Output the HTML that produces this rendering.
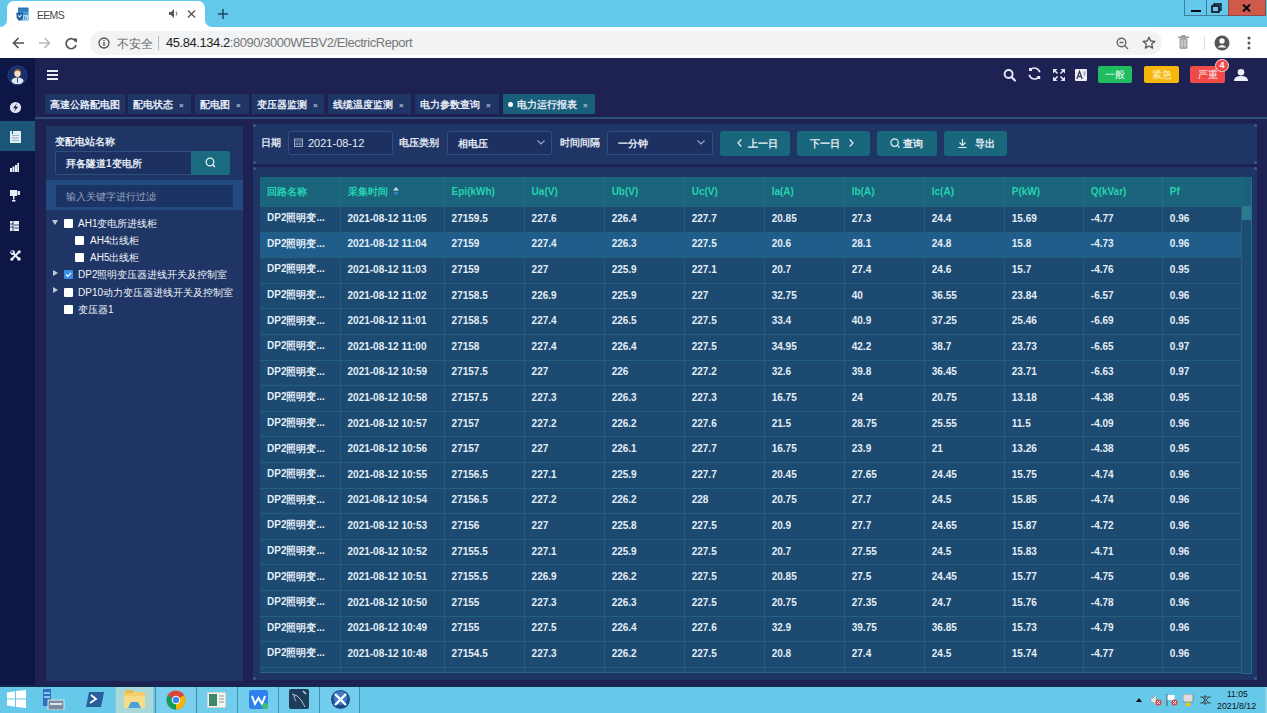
<!DOCTYPE html>
<html><head><meta charset="utf-8"><title>EEMS</title>
<style>
*{box-sizing:border-box;margin:0;padding:0}
html,body{width:1267px;height:713px;overflow:hidden;background:#1d2252;font-family:"Liberation Sans",sans-serif;position:relative}
.abs{position:absolute}
/* chrome */
#tabstrip{left:0;top:0;width:1267px;height:27px;background:#63c8ea}
#ctab{left:7px;top:1px;width:198px;height:27px;background:#fff;border-radius:7px 7px 0 0}
#toolbar{left:0;top:27px;width:1267px;height:31px;background:#fff}
#addr{left:90px;top:31px;width:1072px;height:24px;background:#f1f3f4;border-radius:12px}
.ctext{font-size:12px;color:#333;white-space:nowrap}
/* app */
#side{left:0;top:58px;width:35px;height:628px;background:#0e1645}
#sideact{left:0;top:121px;width:35px;height:30px;background:#1b5578}
#head{left:35px;top:58px;width:1232px;height:34px;background:#1d2252}
.tab{position:absolute;top:94px;height:19.5px;background:#1f3566;color:#e6ecf6;font-size:10px;font-weight:700;line-height:21px;padding-left:5px;white-space:nowrap;overflow:hidden}
.tab .x{font-size:8px;color:#b8c0d0;margin-left:6px}
#tabline{left:35px;top:117px;width:1232px;height:1.5px;background:#2b5078}
#lp{left:46px;top:126px;width:197px;height:555px;background:#1f3566}
#rp1{left:253px;top:124px;width:1004px;height:40px;background:#1f3566}
#rp2{left:253px;top:167px;width:1004px;height:513px;background:#1f3566}
.lbl{position:absolute;font-size:10px;color:#e3e9f3;white-space:nowrap;font-weight:700}
.inp{position:absolute;border:1px solid #2e4f80;background:#1c3162;border-radius:2px}
.btn{position:absolute;top:131px;height:25px;background:#19677d;border-radius:3px;color:#e6eef5;font-size:10px;font-weight:700;line-height:26px;white-space:nowrap;overflow:hidden}
/* table */
#tbl{left:260px;top:176px;width:982px;border-collapse:collapse;table-layout:fixed}
#tbl th{height:29.5px;background:#1a647c;color:#25d3ae;font-size:10px;font-weight:700;text-align:left;padding-left:7px;border-right:1px solid #1e7086;white-space:nowrap}
#tbl td{height:25.6px;background:#1c4a70;color:#e4eef8;font-size:10px;font-weight:700;padding-left:7px;padding-bottom:2px;border-right:1px solid #235d7e;border-top:1px solid #235f7e;white-space:nowrap;overflow:hidden}
#tbl tr.hl td{background:#215d8b}
#tblwrap{left:260px;top:177px;width:991px;height:496px;overflow:hidden;border:1px solid #2a6789;border-top:none;border-left:none}
#sb{left:1241px;top:177px;width:11px;height:497px;background:#1c4c70;border-left:1px solid #24607f;border-right:1px solid #2a6a8a;border-bottom:1px solid #2a6a8a}
#sbh{left:1242px;top:177px;width:9px;height:29.5px;background:#1a627a}
#sbth{left:1242px;top:206px;width:9px;height:14px;background:#2a7b90}
/* taskbar */
#task{left:0;top:685px;width:1267px;height:28px;background:#66c9ea;border-top:2px solid #13284f}
.dot{position:absolute;width:3px;height:3px;border-radius:1.5px;background:#3d5a92}
.tile{position:absolute;top:687px;height:26px;width:41px;border-left:1px solid #3f90b0;background:#72ccec}
</style></head><body>
<!-- Chrome tab strip -->
<div id="tabstrip" class="abs"></div>
<div class="abs" style="left:0;top:19px;width:220px;height:8px;background:#fff"></div>
<div class="abs" style="left:0;top:0;width:7px;height:27px;background:#63c8ea;border-radius:0 0 7px 0"></div>
<div class="abs" style="left:205px;top:0;width:1062px;height:27px;background:#63c8ea;border-radius:0 0 0 7px"></div>
<div id="ctab" class="abs"></div>
<svg class="abs" style="left:16px;top:7px" width="14" height="14" viewBox="0 0 14 14"><rect x="2" y="0.5" width="10.5" height="13" fill="#3c95d8"/><path d="M2 1.5h10.5M2 3.5h10.5M4 0.5v4M7 0.5v4M10 0.5v4" stroke="#2a6ea8" stroke-width="0.9"/><path d="M0.5 5.5h6.5v3.5q0 3.5-3.25 4.5Q0.5 12.5 0.5 9z" fill="#1d5e98"/><path d="M2.2 8.3l1.5 1.8 1.8-2.6" stroke="#cfe8ff" stroke-width="1.1" fill="none"/><rect x="7" y="8" width="5.5" height="5.5" fill="#a6d8f6"/><path d="M8.5 12.5v-3M10.5 12.5v-2" stroke="#3c7fb8" stroke-width="0.9"/></svg>
<div class="abs ctext" style="left:37px;top:9px;font-size:10.5px;letter-spacing:-0.7px;color:#4a4a4a">EEMS</div>
<svg class="abs" style="left:169px;top:9px" width="10" height="9" viewBox="0 0 10 9"><path d="M0 3h2l3-3v9l-3-3H0z" fill="#555"/><path d="M7 2.5q1.5 2 0 4" stroke="#888" fill="none" stroke-width="1.2"/></svg>
<svg class="abs" style="left:187px;top:10px" width="9" height="8" viewBox="0 0 9 8"><path d="M1 0.5L8 7.5M8 0.5L1 7.5" stroke="#555" stroke-width="1.4"/></svg>
<svg class="abs" style="left:218px;top:9px" width="10" height="10" viewBox="0 0 10 10"><path d="M5 0v10M0 5h10" stroke="#1f4a5e" stroke-width="1.5"/></svg>
<!-- window controls -->
<div class="abs" style="left:1184px;top:0;width:23px;height:16px;border:1px solid #3f7f9c;border-top:none;border-right:none"></div>
<div class="abs" style="left:1191px;top:10px;width:10px;height:2px;background:#0a0a14"></div>
<div class="abs" style="left:1206px;top:0;width:22px;height:16px;border:1px solid #3f7f9c;border-top:none;border-right:none"></div>
<svg class="abs" style="left:1211px;top:3px" width="11" height="10" viewBox="0 0 11 10"><path d="M3 2.5V1h7v6H8.5" fill="none" stroke="#0a0a14" stroke-width="1.3"/><rect x="1" y="3" width="7" height="6" fill="none" stroke="#0a0a14" stroke-width="1.6"/></svg>
<div class="abs" style="left:1228px;top:0;width:38px;height:16px;background:#cf5a4c;border:1px solid #8b4a46;border-top:none"></div>
<svg class="abs" style="left:1242px;top:4px" width="9" height="8" viewBox="0 0 9 8"><path d="M1 0.5L8 7.5M8 0.5L1 7.5" stroke="#0a0a14" stroke-width="2.1"/></svg>
<!-- toolbar -->
<div id="toolbar" class="abs"></div>
<svg class="abs" style="left:12px;top:37px" width="13" height="12" viewBox="0 0 13 12"><path d="M12 6H1.5M6.5 1L1.5 6l5 5" stroke="#555" stroke-width="1.7" fill="none"/></svg>
<svg class="abs" style="left:38px;top:37px" width="13" height="12" viewBox="0 0 13 12"><path d="M1 6h10.5M6.5 1l5 5-5 5" stroke="#bbb" stroke-width="1.7" fill="none"/></svg>
<svg class="abs" style="left:65px;top:37px" width="13" height="13" viewBox="0 0 13 13"><path d="M10.5 4.2A5 5 0 1 0 11 8" stroke="#555" stroke-width="1.7" fill="none"/><path d="M7.5 1.5h4.5v4.5z" fill="#555"/></svg>
<div id="addr" class="abs"></div>
<svg class="abs" style="left:98px;top:37px" width="12" height="12" viewBox="0 0 12 12"><circle cx="6" cy="6" r="5" stroke="#555" stroke-width="1.3" fill="none"/><rect x="5.3" y="5" width="1.4" height="4" fill="#555"/><rect x="5.3" y="2.8" width="1.4" height="1.4" fill="#555"/></svg>
<div class="abs ctext" style="left:117px;top:36px;color:#666;font-size:12px">不安全</div>
<div class="abs" style="left:158px;top:36px;width:1px;height:14px;background:#bbb"></div>
<div class="abs ctext" style="left:166px;top:35px;font-size:13px;letter-spacing:-0.45px"><span style="color:#222">45.84.134.2</span><span style="color:#777">:8090/3000WEBV2/ElectricReport</span></div>
<svg class="abs" style="left:1116px;top:37px" width="13" height="13" viewBox="0 0 13 13"><circle cx="5.5" cy="5.5" r="4.3" stroke="#666" stroke-width="1.4" fill="none"/><path d="M8.5 8.5l3.5 3.5M3.5 5.5h4" stroke="#666" stroke-width="1.4"/></svg>
<svg class="abs" style="left:1142px;top:36px" width="14" height="14" viewBox="0 0 14 14"><path d="M7 1.2l1.7 3.8 4.1.4-3.1 2.7.9 4L7 10 3.4 12.1l.9-4L1.2 5.4l4.1-.4z" stroke="#555" stroke-width="1.3" fill="none" stroke-linejoin="round"/></svg>
<svg class="abs" style="left:1178px;top:35px" width="11" height="15" viewBox="0 0 11 15"><rect x="1.5" y="3" width="8" height="11" rx="1" fill="#aaa"/><rect x="0" y="1.5" width="11" height="1.5" fill="#999"/><rect x="3.5" y="0" width="4" height="2" fill="#999"/><path d="M4 5v7M7 5v7" stroke="#ddd" stroke-width="1"/></svg>
<div class="abs" style="left:1204px;top:36px;width:1px;height:14px;background:#ddd"></div>
<svg class="abs" style="left:1214px;top:35px" width="16" height="16" viewBox="0 0 16 16"><circle cx="8" cy="8" r="7.5" fill="#555"/><circle cx="8" cy="6" r="2.7" fill="#fff"/><path d="M3.5 12.5q4.5-5 9 0" fill="#fff"/></svg>
<svg class="abs" style="left:1247px;top:36px" width="4" height="14" viewBox="0 0 4 14"><circle cx="2" cy="2" r="1.5" fill="#555"/><circle cx="2" cy="7" r="1.5" fill="#555"/><circle cx="2" cy="12" r="1.5" fill="#555"/></svg>
<!-- app -->
<div id="side" class="abs"></div>
<div id="sideact" class="abs"></div>
<!-- avatar -->
<svg class="abs" style="left:7px;top:65px" width="21" height="21" viewBox="0 0 21 21"><circle cx="10.5" cy="10.5" r="10" fill="#182f6c"/><circle cx="10.5" cy="10.5" r="9.6" fill="none" stroke="#22407e" stroke-width="0.8"/><ellipse cx="10.5" cy="15.8" rx="6" ry="3.3" fill="#dde9f4"/><rect x="10" y="13" width="1" height="4.5" fill="#3a4a5a"/><ellipse cx="10.5" cy="8.3" rx="3.2" ry="3.6" fill="#fbdcbc"/><path d="M7.3 7.6q0-3.6 3.2-3.6t3.2 3.6q-.6-1.8-3.2-1.8t-3.2 1.8z" fill="#a8652e"/></svg>
<!-- side icons -->
<svg class="abs" style="left:9px;top:101px" width="13" height="13" viewBox="0 0 13 13"><circle cx="6.5" cy="6.5" r="5.6" fill="#dfe4f0"/><path d="M8 2.2L4 7.2h2.6L5 10.8 9.2 5.8H6.6z" fill="#10174a"/></svg>
<svg class="abs" style="left:10px;top:131px" width="11" height="12" viewBox="0 0 11 12"><rect x="0" y="0" width="11" height="12" fill="#e4ecf6"/><rect x="2" y="0" width="1" height="3" fill="#1b5578"/><path d="M2 4.5h7M2 7h7M2 9.5h7" stroke="#8fb0c8" stroke-width="0.9"/></svg>
<svg class="abs" style="left:10px;top:163px" width="9" height="9" viewBox="0 0 9 9"><rect x="0" y="5" width="2" height="4" fill="#e8eef8"/><rect x="2.5" y="3.5" width="2" height="5.5" fill="#e8eef8"/><rect x="5" y="2" width="2" height="7" fill="#e8eef8"/><rect x="7.3" y="0" width="1.7" height="9" fill="#e8eef8"/></svg>
<svg class="abs" style="left:10px;top:190px" width="10" height="12" viewBox="0 0 10 12"><rect x="0" y="0" width="7" height="6" fill="#e8eef8"/><rect x="7.5" y="1" width="2.5" height="4" fill="#e8eef8"/><rect x="3" y="6" width="1.5" height="3.5" fill="#e8eef8"/><rect x="2" y="10" width="3.5" height="1.5" fill="#e8eef8"/></svg>
<svg class="abs" style="left:10px;top:221px" width="9" height="10" viewBox="0 0 9 10"><rect x="0" y="0" width="9" height="10" fill="#e8eef8"/><path d="M3 0v10M0 3h3M0 6h3M4 4h5M4 7h5" stroke="#10174a" stroke-width="0.8"/></svg>
<svg class="abs" style="left:10px;top:250px" width="11" height="11" viewBox="0 0 11 11"><path d="M2 9L9 2M3 3l6 6" stroke="#e8eef8" stroke-width="2"/><circle cx="2.6" cy="2.6" r="2.4" fill="#e8eef8"/><circle cx="2" cy="2" r="0.9" fill="#0e1645"/><circle cx="9" cy="9" r="1.8" fill="#e8eef8"/><circle cx="9.2" cy="1.8" r="1.6" fill="#e8eef8"/><circle cx="1.8" cy="9.2" r="1.5" fill="#e8eef8"/></svg>
<!-- header -->
<div id="head" class="abs"></div>
<svg class="abs" style="left:47px;top:70px" width="11" height="10" viewBox="0 0 11 10"><path d="M0 1h11M0 5h11M0 9h11" stroke="#e8eef8" stroke-width="1.8"/></svg>
<svg class="abs" style="left:1002px;top:68px" width="15" height="15" viewBox="0 0 15 15"><circle cx="6.6" cy="6" r="4" stroke="#e6e8f6" stroke-width="1.9" fill="none"/><path d="M9.5 9L13 12.5" stroke="#e6e8f6" stroke-width="2.2" stroke-linecap="round"/></svg>
<svg class="abs" style="left:1027px;top:66px" width="15" height="15" viewBox="0 0 15 15"><path d="M3.5 3.6A5.6 5.6 0 0 1 12.8 6.2M11.5 11.4A5.6 5.6 0 0 1 2.2 8.8" stroke="#e6e8f6" stroke-width="1.7" fill="none"/><rect x="2" y="2" width="3" height="3" fill="#e6e8f6"/><rect x="10.2" y="10" width="3" height="3" fill="#e6e8f6"/></svg>
<svg class="abs" style="left:1053px;top:69px" width="12" height="12" viewBox="0 0 12 12"><path d="M0 0h4.5L0 4.5zM12 0v4.5L7.5 0zM0 12V7.5L4.5 12zM12 12H7.5L12 7.5z" fill="#e6e8f6"/><path d="M1.5 1.5l3 3M10.5 1.5l-3 3M1.5 10.5l3-3M10.5 10.5l-3-3" stroke="#e6e8f6" stroke-width="1.6"/></svg>
<svg class="abs" style="left:1075px;top:69px" width="12" height="12" viewBox="0 0 12 12"><rect width="12" height="12" rx="1" fill="#ecedf7"/><path d="M1.8 10L4.5 2.5 7.2 10M2.8 7.5h3.4" stroke="#3a3d55" stroke-width="1.3" fill="none"/><path d="M8.3 3h2.5M8.3 5h2.5M9.5 3v4" stroke="#9a9cb0" stroke-width="0.8"/></svg>
<div class="abs" style="left:1098px;top:66px;width:34px;height:17px;background:#1fbd60;border-radius:2px;color:#e8fff0;font-size:10px;line-height:17px;text-align:center">一般</div>
<div class="abs" style="left:1144px;top:66px;width:35px;height:17px;background:#f4b70a;border-radius:2px;color:#fff5dd;font-size:10px;line-height:17px;text-align:center">紧急</div>
<div class="abs" style="left:1190px;top:66px;width:35px;height:17px;background:#f04a48;border-radius:2px;color:#ffecec;font-size:10px;line-height:17px;text-align:center">严重</div>
<div class="abs" style="left:1215px;top:59px;width:14px;height:13px;background:#f04a48;border:1.5px solid #f6d6d6;border-radius:7px;color:#fff;font-size:9px;line-height:10px;text-align:center;font-weight:700">4</div>
<svg class="abs" style="left:1234px;top:69px" width="14" height="12" viewBox="0 0 14 12"><circle cx="7" cy="3.3" r="3.3" fill="#eef"/><path d="M0 12q0-5 7-5t7 5z" fill="#eef"/></svg>
<!-- tabs -->
<div class="tab" style="left:45px;width:80px">高速公路配电图</div>
<div class="tab" style="left:128px;width:63px">配电状态<span class="x">×</span></div>
<div class="tab" style="left:195px;width:54px">配电图<span class="x">×</span></div>
<div class="tab" style="left:252px;width:72px">变压器监测<span class="x">×</span></div>
<div class="tab" style="left:328px;width:83px">线缆温度监测<span class="x">×</span></div>
<div class="tab" style="left:415px;width:84px">电力参数查询<span class="x">×</span></div>
<div class="tab" style="left:503px;width:92px;background:#175f7a"><span style="display:inline-block;width:5px;height:5px;border-radius:3px;background:#fff;margin-right:4px;vertical-align:1px"></span>电力运行报表<span class="x">×</span></div>
<div id="tabline" class="abs"></div>
<!-- left panel -->
<div id="lp" class="abs"></div>
<div class="lbl" style="left:55px;top:135px">变配电站名称</div>
<div class="inp" style="left:55px;top:151px;width:137px;height:24px;border-right:none"></div>
<div class="lbl" style="left:66px;top:157px">拜各隧道1变电所</div>
<div class="abs" style="left:191px;top:151px;width:39px;height:24px;background:#1a6a80;border-radius:0 2px 2px 0"></div>
<svg class="abs" style="left:205px;top:157px" width="11" height="11" viewBox="0 0 11 11"><circle cx="5" cy="5" r="3.8" stroke="#e6eef5" stroke-width="1.3" fill="none"/><path d="M7.8 7.8L10 10" stroke="#e6eef5" stroke-width="1.3"/></svg>
<div class="abs" style="left:46px;top:180px;width:197px;height:30px;background:#244a82"></div>
<div class="abs" style="left:56px;top:185px;width:177px;height:22px;background:#1c3465"></div>
<div class="lbl" style="left:66px;top:190px;color:#95a3bf;font-weight:400">输入关键字进行过滤</div>
<!-- tree -->
<svg class="abs" style="left:52px;top:220px" width="6" height="5" viewBox="0 0 6 5"><path d="M0 0h6L3 5z" fill="#c0c8d8"/></svg>
<div class="abs" style="left:64px;top:219px;width:9px;height:9px;background:#fff;border-radius:1px"></div>
<div class="lbl" style="left:78px;top:217px;font-weight:400;color:#f2f5fa">AH1变电所进线柜</div>
<div class="abs" style="left:75px;top:236px;width:9px;height:9px;background:#fff;border-radius:1px"></div>
<div class="lbl" style="left:90px;top:234px;font-weight:400;color:#f2f5fa">AH4出线柜</div>
<div class="abs" style="left:75px;top:253px;width:9px;height:9px;background:#fff;border-radius:1px"></div>
<div class="lbl" style="left:90px;top:251px;font-weight:400;color:#f2f5fa">AH5出线柜</div>
<svg class="abs" style="left:53px;top:270px" width="5" height="6" viewBox="0 0 5 6"><path d="M0 0v6l5-3z" fill="#c0c8d8"/></svg>
<div class="abs" style="left:64px;top:270px;width:9px;height:9px;background:#3a8ee6;border-radius:1px"></div>
<svg class="abs" style="left:65px;top:271px" width="7" height="7" viewBox="0 0 7 7"><path d="M1 3.5l1.8 1.8L6 1.8" stroke="#fff" stroke-width="1.2" fill="none"/></svg>
<div class="lbl" style="left:78px;top:268px;font-weight:400;color:#f2f5fa">DP2照明变压器进线开关及控制室</div>
<svg class="abs" style="left:53px;top:287px" width="5" height="6" viewBox="0 0 5 6"><path d="M0 0v6l5-3z" fill="#c0c8d8"/></svg>
<div class="abs" style="left:64px;top:288px;width:9px;height:9px;background:#fff;border-radius:1px"></div>
<div class="lbl" style="left:78px;top:286px;font-weight:400;color:#f2f5fa">DP10动力变压器进线开关及控制室</div>
<div class="abs" style="left:64px;top:305px;width:9px;height:9px;background:#fff;border-radius:1px"></div>
<div class="lbl" style="left:78px;top:303px;font-weight:400;color:#f2f5fa">变压器1</div>
<!-- right toolbar -->
<div id="rp1" class="abs"></div>
<div class="lbl" style="left:261px;top:136px">日期</div>
<div class="inp" style="left:288px;top:131px;width:105px;height:24px"></div>
<svg class="abs" style="left:294px;top:138px" width="9" height="9" viewBox="0 0 9 9"><rect x="0.5" y="1" width="8" height="7.5" stroke="#9aa8c0" fill="none"/><path d="M0.5 3h8M3 4.5v3M6 4.5v3M0.5 6h8" stroke="#9aa8c0" stroke-width="0.8"/></svg>
<div class="lbl" style="left:308px;top:137px;font-size:11px;font-weight:400;color:#e8eef6">2021-08-12</div>
<div class="lbl" style="left:399px;top:136px">电压类别</div>
<div class="inp" style="left:447px;top:131px;width:105px;height:24px"></div>
<div class="lbl" style="left:458px;top:137px">相电压</div>
<svg class="abs" style="left:537px;top:140px" width="8" height="5" viewBox="0 0 8 5"><path d="M0.5 0.5L4 4l3.5-3.5" stroke="#9aa8c0" stroke-width="1.1" fill="none"/></svg>
<div class="lbl" style="left:560px;top:136px">时间间隔</div>
<div class="inp" style="left:607px;top:131px;width:106px;height:24px"></div>
<div class="lbl" style="left:618px;top:137px">一分钟</div>
<svg class="abs" style="left:697px;top:140px" width="8" height="5" viewBox="0 0 8 5"><path d="M0.5 0.5L4 4l3.5-3.5" stroke="#9aa8c0" stroke-width="1.1" fill="none"/></svg>
<div class="btn" style="left:720px;width:70px;padding-left:17px"><svg width="5" height="8" viewBox="0 0 5 8" style="vertical-align:-0px;margin-right:6px"><path d="M4.3 0.5L1 4l3.3 3.5" stroke="#e6eef5" stroke-width="1.2" fill="none"/></svg>上一日</div>
<div class="btn" style="left:797px;width:73px;padding-left:13px">下一日<svg width="5" height="8" viewBox="0 0 5 8" style="vertical-align:0px;margin-left:9px"><path d="M0.7 0.5L4 4 0.7 7.5" stroke="#e6eef5" stroke-width="1.2" fill="none"/></svg></div>
<div class="btn" style="left:877px;width:60px;padding-left:13px"><svg width="10" height="10" viewBox="0 0 10 10" style="vertical-align:-1px;margin-right:3px"><circle cx="4.6" cy="4.6" r="3.7" stroke="#e6eef5" stroke-width="1.2" fill="none"/><path d="M7.2 7.2L9.5 9.5" stroke="#e6eef5" stroke-width="1.2"/></svg>查询</div>
<div class="btn" style="left:944px;width:63px;padding-left:14px"><svg width="9" height="9" viewBox="0 0 9 9" style="vertical-align:-1px;margin-right:8px"><path d="M4.5 0v6M1.5 3.5l3 3 3-3M0.5 8.5h8" stroke="#e6eef5" stroke-width="1.1" fill="none"/></svg>导出</div>
<!-- table panel -->
<div id="rp2" class="abs"></div>
<div id="tblwrap" class="abs">
<table id="tbl" style="position:absolute;left:0;top:0">
<colgroup><col style="width:80px"><col style="width:104px"><col style="width:80px"><col style="width:80px"><col style="width:80px"><col style="width:80px"><col style="width:80px"><col style="width:80px"><col style="width:80px"><col style="width:79px"><col style="width:79px"><col style="width:79px"></colgroup>
<thead><tr><th>回路名称</th><th>采集时间 <svg width="6" height="9" viewBox="0 0 6 9" style="vertical-align:-1px;margin-left:3px"><path d="M0 3.5L3 0l3 3.5z" fill="#bfe0f5"/><path d="M0 5L3 9l3-4z" fill="#2d7fc0"/></svg></th><th>Epi(kWh)</th><th>Ua(V)</th><th>Ub(V)</th><th>Uc(V)</th><th>Ia(A)</th><th>Ib(A)</th><th>Ic(A)</th><th>P(kW)</th><th>Q(kVar)</th><th>Pf</th></tr></thead>
<tbody>
<tr><td>DP2照明变...</td><td>2021-08-12 11:05</td><td>27159.5</td><td>227.6</td><td>226.4</td><td>227.7</td><td>20.85</td><td>27.3</td><td>24.4</td><td>15.69</td><td>-4.77</td><td>0.96</td></tr>
<tr class="hl"><td>DP2照明变...</td><td>2021-08-12 11:04</td><td>27159</td><td>227.4</td><td>226.3</td><td>227.5</td><td>20.6</td><td>28.1</td><td>24.8</td><td>15.8</td><td>-4.73</td><td>0.96</td></tr>
<tr><td>DP2照明变...</td><td>2021-08-12 11:03</td><td>27159</td><td>227</td><td>225.9</td><td>227.1</td><td>20.7</td><td>27.4</td><td>24.6</td><td>15.7</td><td>-4.76</td><td>0.95</td></tr>
<tr><td>DP2照明变...</td><td>2021-08-12 11:02</td><td>27158.5</td><td>226.9</td><td>225.9</td><td>227</td><td>32.75</td><td>40</td><td>36.55</td><td>23.84</td><td>-6.57</td><td>0.96</td></tr>
<tr><td>DP2照明变...</td><td>2021-08-12 11:01</td><td>27158.5</td><td>227.4</td><td>226.5</td><td>227.5</td><td>33.4</td><td>40.9</td><td>37.25</td><td>25.46</td><td>-6.69</td><td>0.95</td></tr>
<tr><td>DP2照明变...</td><td>2021-08-12 11:00</td><td>27158</td><td>227.4</td><td>226.4</td><td>227.5</td><td>34.95</td><td>42.2</td><td>38.7</td><td>23.73</td><td>-6.65</td><td>0.97</td></tr>
<tr><td>DP2照明变...</td><td>2021-08-12 10:59</td><td>27157.5</td><td>227</td><td>226</td><td>227.2</td><td>32.6</td><td>39.8</td><td>36.45</td><td>23.71</td><td>-6.63</td><td>0.97</td></tr>
<tr><td>DP2照明变...</td><td>2021-08-12 10:58</td><td>27157.5</td><td>227.3</td><td>226.3</td><td>227.3</td><td>16.75</td><td>24</td><td>20.75</td><td>13.18</td><td>-4.38</td><td>0.95</td></tr>
<tr><td>DP2照明变...</td><td>2021-08-12 10:57</td><td>27157</td><td>227.2</td><td>226.2</td><td>227.6</td><td>21.5</td><td>28.75</td><td>25.55</td><td>11.5</td><td>-4.09</td><td>0.96</td></tr>
<tr><td>DP2照明变...</td><td>2021-08-12 10:56</td><td>27157</td><td>227</td><td>226.1</td><td>227.7</td><td>16.75</td><td>23.9</td><td>21</td><td>13.26</td><td>-4.38</td><td>0.95</td></tr>
<tr><td>DP2照明变...</td><td>2021-08-12 10:55</td><td>27156.5</td><td>227.1</td><td>225.9</td><td>227.7</td><td>20.45</td><td>27.65</td><td>24.45</td><td>15.75</td><td>-4.74</td><td>0.96</td></tr>
<tr><td>DP2照明变...</td><td>2021-08-12 10:54</td><td>27156.5</td><td>227.2</td><td>226.2</td><td>228</td><td>20.75</td><td>27.7</td><td>24.5</td><td>15.85</td><td>-4.74</td><td>0.96</td></tr>
<tr><td>DP2照明变...</td><td>2021-08-12 10:53</td><td>27156</td><td>227</td><td>225.8</td><td>227.5</td><td>20.9</td><td>27.7</td><td>24.65</td><td>15.87</td><td>-4.72</td><td>0.96</td></tr>
<tr><td>DP2照明变...</td><td>2021-08-12 10:52</td><td>27155.5</td><td>227.1</td><td>225.9</td><td>227.5</td><td>20.7</td><td>27.55</td><td>24.5</td><td>15.83</td><td>-4.71</td><td>0.96</td></tr>
<tr><td>DP2照明变...</td><td>2021-08-12 10:51</td><td>27155.5</td><td>226.9</td><td>226.2</td><td>227.5</td><td>20.85</td><td>27.5</td><td>24.45</td><td>15.77</td><td>-4.75</td><td>0.96</td></tr>
<tr><td>DP2照明变...</td><td>2021-08-12 10:50</td><td>27155</td><td>227.3</td><td>226.3</td><td>227.5</td><td>20.75</td><td>27.35</td><td>24.7</td><td>15.76</td><td>-4.78</td><td>0.96</td></tr>
<tr><td>DP2照明变...</td><td>2021-08-12 10:49</td><td>27155</td><td>227.5</td><td>226.4</td><td>227.6</td><td>32.9</td><td>39.75</td><td>36.85</td><td>15.73</td><td>-4.79</td><td>0.96</td></tr>
<tr><td>DP2照明变...</td><td>2021-08-12 10:48</td><td>27154.5</td><td>227.3</td><td>226.2</td><td>227.5</td><td>20.8</td><td>27.4</td><td>24.5</td><td>15.74</td><td>-4.77</td><td>0.96</td></tr>
<tr><td>DP2照明变...</td><td>2021-08-12 10:47</td><td>27154.5</td><td>227.3</td><td>226.2</td><td>227.5</td><td>20.8</td><td>27.4</td><td>24.5</td><td>15.74</td><td>-4.77</td><td>0.96</td></tr></tbody></table>
</div>
<div id="sb" class="abs"></div>
<div id="sbh" class="abs"></div>
<div id="sbth" class="abs"></div>
<div class="dot" style="left:253px;top:124px"></div><div class="dot" style="left:1254px;top:124px"></div><div class="dot" style="left:253px;top:161px"></div><div class="dot" style="left:1254px;top:161px"></div><div class="dot" style="left:253px;top:167px"></div><div class="dot" style="left:1254px;top:167px"></div><div class="dot" style="left:253px;top:677px"></div><div class="dot" style="left:1254px;top:677px"></div>
<!-- taskbar -->
<div id="task" class="abs"></div>
<svg class="abs" style="left:7px;top:690px" width="19" height="18" viewBox="0 0 19 18"><path d="M0 2.5L8 1.3V8.5H0zM9 1.1L19 0V8.5H9zM0 9.5h8v7.2L0 15.5zM9 9.5h10V18L9 16.9z" fill="#fff"/></svg>
<svg class="abs" style="left:43px;top:689px" width="22" height="21" viewBox="0 0 22 21"><rect x="0" y="0" width="8" height="17" fill="#2e6fc0"/><rect x="1" y="3" width="6" height="2" fill="#8fc4f0"/><rect x="1" y="7" width="6" height="2" fill="#8fc4f0"/><rect x="5" y="11" width="16" height="10" fill="#7a8ca0" stroke="#dfe8ef" stroke-width="1"/><rect x="7" y="14" width="12" height="2" fill="#e0e8ef"/></svg>
<svg class="abs" style="left:86px;top:692px" width="18" height="15" viewBox="0 0 18 15"><path d="M3 0h15l-3 15H0z" fill="#2a5d9c"/><path d="M5 3l5 4-6 4" stroke="#fff" stroke-width="1.8" fill="none"/></svg>
<div class="abs" style="left:115px;top:687px;width:39px;height:26px;background:#a9d8d8;border-left:1px solid #86c8dc;border-right:1px solid #86c8dc"></div>
<svg class="abs" style="left:124px;top:690px" width="21" height="19" viewBox="0 0 21 19"><rect x="0" y="2" width="21" height="16" fill="#f2cd6a"/><rect x="2" y="0" width="7" height="3" fill="#e8b848"/><rect x="0" y="6" width="21" height="12" fill="#f6db88"/><path d="M4 18l3-6h7l3 6" fill="#4aa3d8"/></svg>
<div class="tile" style="left:155px;width:41px;background:#7bcfee"></div>
<svg class="abs" style="left:166px;top:690px" width="20" height="20" viewBox="0 0 20 20"><circle cx="10" cy="10" r="9.5" fill="#db4437"/><path d="M10 10L1.8 5.3A9.5 9.5 0 0 0 10 19.5z" fill="#0f9d58"/><path d="M10 10L18.2 5.3A9.5 9.5 0 0 1 10 19.5z" fill="#f4b400"/><circle cx="10" cy="10" r="4.3" fill="#fff"/><circle cx="10" cy="10" r="3.3" fill="#4285f4"/></svg>
<div class="tile" style="left:196px"></div>
<svg class="abs" style="left:207px;top:692px" width="19" height="16" viewBox="0 0 19 16"><rect x="0" y="0" width="19" height="16" fill="#f4f4f0" stroke="#aaa" stroke-width="0.8"/><rect x="2" y="2" width="8" height="12" fill="#3d8a6a"/><path d="M12 4h5M12 7h5M12 10h5" stroke="#999" stroke-width="1"/></svg>
<div class="tile" style="left:237px"></div>
<svg class="abs" style="left:249px;top:690px" width="20" height="20" viewBox="0 0 20 20"><rect x="0" y="0" width="19" height="19" rx="3" fill="#2f80ea"/><path d="M3 6l3 8 3.5-6 3.5 6 3-8" stroke="#fff" stroke-width="2" fill="none"/><circle cx="16" cy="16" r="3" fill="#3cc36a"/></svg>
<div class="tile" style="left:278px"></div>
<svg class="abs" style="left:289px;top:689px" width="20" height="20" viewBox="0 0 20 20"><rect x="0" y="0" width="20" height="20" rx="2" fill="#1e3d5c"/><path d="M3 5q6 1 9 6t4 7M5 6q0 4 2 6" stroke="#c8d4de" stroke-width="0.9" fill="none"/><path d="M14 2l3 3" stroke="#c8d4de" stroke-width="1.4"/></svg>
<div class="tile" style="left:319px"></div>
<svg class="abs" style="left:331px;top:690px" width="19" height="19" viewBox="0 0 19 19"><circle cx="9.5" cy="9.5" r="9.5" fill="#1f4a8a"/><circle cx="9.5" cy="8" r="7" fill="#3f7bc0"/><path d="M4 15L15 4M4 4l11 11" stroke="#fff" stroke-width="2.4"/></svg>
<div class="tile" style="left:359px;width:1px"></div>
<!-- tray -->
<svg class="abs" style="left:1136px;top:698px" width="6" height="4" viewBox="0 0 6 4"><path d="M0 4L3 0l3 4z" fill="#111"/></svg>
<svg class="abs" style="left:1150px;top:694px" width="12" height="12" viewBox="0 0 12 12"><path d="M1 4h2l3-3v10L3 8H1z" fill="#f0f0f0" stroke="#888" stroke-width="0.5"/><circle cx="8.5" cy="8.5" r="3" fill="#e04040"/><path d="M7 7l3 3M10 7l-3 3" stroke="#fff" stroke-width="0.9"/></svg>
<svg class="abs" style="left:1166px;top:694px" width="12" height="12" viewBox="0 0 12 12"><path d="M1 0v12" stroke="#555" stroke-width="1"/><path d="M1.5 1h7v5h-7z" fill="#fff"/><circle cx="8.5" cy="8.5" r="3" fill="#e04040"/><path d="M7 7l3 3M10 7l-3 3" stroke="#fff" stroke-width="0.9"/></svg>
<svg class="abs" style="left:1183px;top:694px" width="11" height="12" viewBox="0 0 11 12"><rect x="0" y="0" width="10" height="8" fill="#ddd" stroke="#666" stroke-width="0.6"/><path d="M2 12L5 7l3 5z" fill="#f5c400"/></svg>
<svg class="abs" style="left:1200px;top:695px" width="11" height="10" viewBox="0 0 11 10"><path d="M0 2h11M0 8h11M2 2l3 3-3 3M9 2L6 5l3 3M5 0v10" stroke="#333" stroke-width="0.8" fill="none"/></svg>
<div class="abs" style="left:1227px;top:689px;font-size:8.5px;color:#111;white-space:nowrap">11:05</div>
<div class="abs" style="left:1217px;top:701px;font-size:8.8px;color:#111;white-space:nowrap">2021/8/12</div>
<div class="abs" style="left:1265px;top:687px;width:2px;height:26px;background:#8fd5ee"></div>
</body></html>
